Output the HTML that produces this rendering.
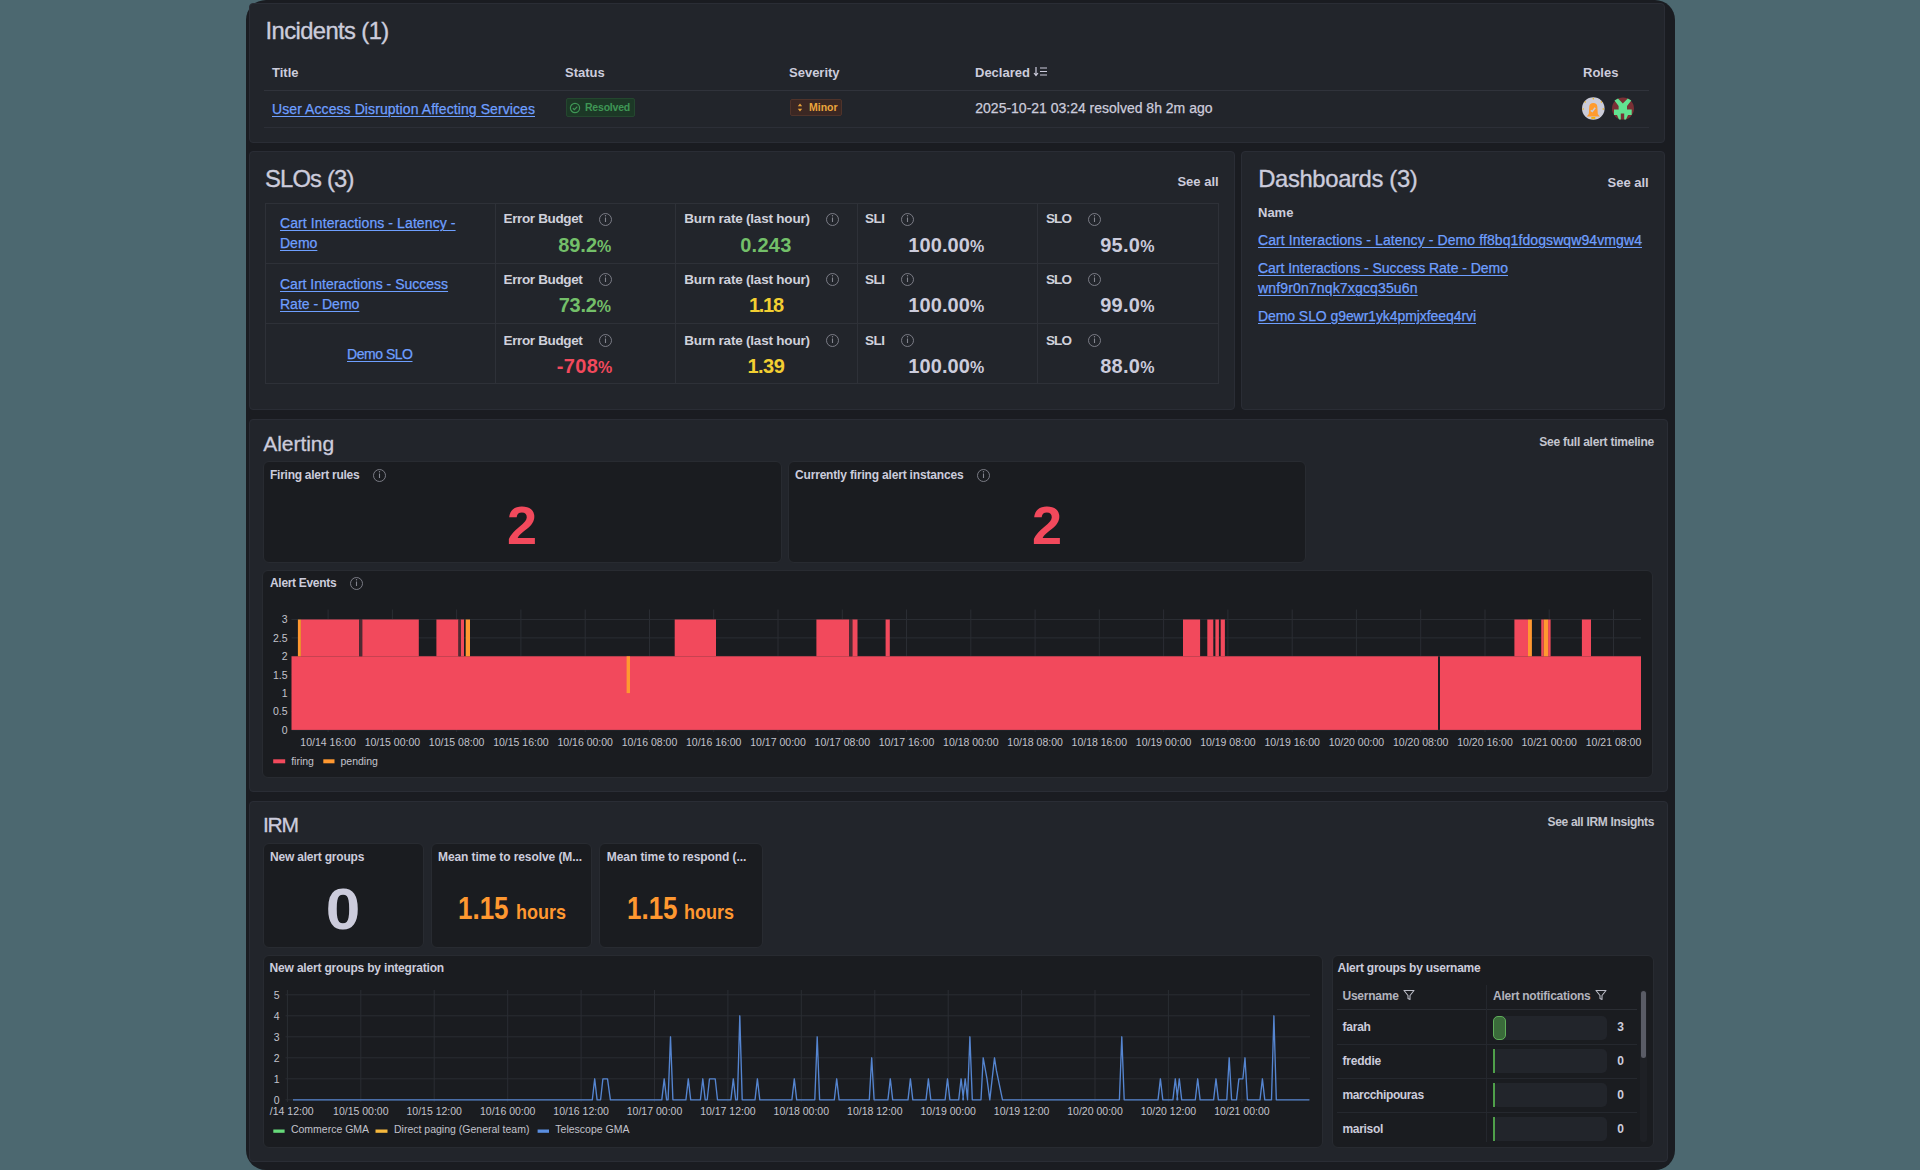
<!DOCTYPE html>
<html><head><meta charset="utf-8"><style>
html,body{margin:0;padding:0;}
body{width:1920px;height:1170px;background:#4c6870;position:relative;overflow:hidden;font-family:"Liberation Sans", sans-serif;}
.t{position:absolute;white-space:nowrap;}
.b{position:absolute;box-sizing:border-box;}
.s{position:absolute;overflow:visible;}
u{text-decoration-thickness:1px;text-underline-offset:1.5px;}
</style></head><body>
<div class="b" style="left:246px;top:0px;width:1429px;height:1170px;background:#1a1c21;border-radius:20px;"></div>
<div class="b" style="left:249px;top:3px;width:1416px;height:140px;background:#22252b;border:1px solid #2a2d35;border-radius:4px;"></div>
<div class="t" style="left:265.6px;top:19.1px;font-size:23.8px;line-height:23.8px;color:#ccccdc;font-weight:400;-webkit-text-stroke:0.35px #ccccdc;letter-spacing:-0.612px;" id="fit0">Incidents (1)</div>
<div class="t" style="left:272.0px;top:66.0px;font-size:13px;line-height:13px;color:#ccccdc;font-weight:700;">Title</div>
<div class="t" style="left:565.0px;top:66.0px;font-size:13px;line-height:13px;color:#ccccdc;font-weight:700;">Status</div>
<div class="t" style="left:789.0px;top:66.0px;font-size:13px;line-height:13px;color:#ccccdc;font-weight:700;">Severity</div>
<div class="t" style="left:975.0px;top:66.0px;font-size:13px;line-height:13px;color:#ccccdc;font-weight:700;">Declared</div>
<div class="t" style="left:1583.0px;top:66.0px;font-size:13px;line-height:13px;color:#ccccdc;font-weight:700;">Roles</div>
<svg class="s" style="left:1034px;top:66px" width="14" height="12"><path d="M2 1v8M0 7l2 2.5 2-2.5" stroke="#ccccdc" stroke-width="1.2" fill="none"/><path d="M6 2h7M6 5.5h7M6 9h7" stroke="#ccccdc" stroke-width="1.2"/></svg>
<div class="b" style="left:264px;top:90px;width:1385px;height:1px;background:#30333b;border-radius:0px;"></div>
<div class="t" style="left:272.0px;top:101.7px;font-size:14px;line-height:14px;color:#6e9fff;font-weight:400;-webkit-text-stroke:0.25px #6e9fff;letter-spacing:0.082px;" id="fit1"><u>User Access Disruption Affecting Services</u></div>
<div class="b" style="left:566px;top:98px;width:69px;height:19px;background:#1c3826;border:1px solid #24472f;border-radius:2px;"></div>
<svg class="s" style="left:569px;top:101.5px" width="12" height="12"><circle cx="6" cy="6" r="4.6" fill="none" stroke="#3f9655" stroke-width="1.2"/><path d="M3.8 6.2l1.6 1.5 2.9-3" stroke="#3f9655" stroke-width="1.2" fill="none"/></svg>
<div class="t" style="left:585.0px;top:102.4px;font-size:10.5px;line-height:10.5px;color:#3f9655;font-weight:700;letter-spacing:-0.211px;" id="fit2">Resolved</div>
<div class="b" style="left:790px;top:99px;width:52px;height:17px;background:#3b2723;border:1px solid #4f332a;border-radius:2px;"></div>
<svg class="s" style="left:796px;top:102px" width="8" height="11"><path d="M4 1.5L6.2 4.3H1.8Z M4 9.5L6.2 6.7H1.8Z" fill="#e8a33a"/></svg>
<div class="t" style="left:809.0px;top:102.4px;font-size:10.5px;line-height:10.5px;color:#eba53c;font-weight:700;letter-spacing:-0.016px;" id="fit3">Minor</div>
<div class="t" style="left:975.3px;top:101.4px;font-size:14px;line-height:14px;color:#ccccdc;font-weight:400;-webkit-text-stroke:0.25px #ccccdc;letter-spacing:-0.006px;" id="fit4">2025-10-21 03:24 resolved 8h 2m ago</div>
<div class="b" style="left:264px;top:127px;width:1385px;height:1px;background:#2c2f37;border-radius:0px;"></div>
<svg class="s" style="left:1581px;top:97px" width="54" height="24"><circle cx="12.3" cy="11.5" r="11.3" fill="#cbccd9"/><path d="M7.8 17 L8.3 9.5 Q8.5 6 12.3 6 Q16.1 6 16.3 9.5 L16.8 17 L18.8 19.5 L5.8 19.5 Z" fill="#ff9b2e"/><rect x="10.3" y="20" width="4" height="1.8" fill="#f5b000"/><path d="M9.8 13.3 L11.3 14.5 L14.2 10.8" stroke="#cbccd9" stroke-width="1.5" fill="none"/><circle cx="12.3" cy="1.8" r="0.7" fill="#f5b000"/><circle cx="4.2" cy="5" r="0.7" fill="#f5b000"/><circle cx="20.4" cy="5" r="0.7" fill="#f5b000"/><circle cx="2.2" cy="12" r="0.7" fill="#f5b000"/><circle cx="22.3" cy="12" r="0.8" fill="#f5b000"/><circle cx="42" cy="11.6" r="11" fill="#7a3035"/><path d="M33.5 3.5 L37 1.5 L41.8 6.5 L46.8 1.5 L50.3 3.5 L46 9 L46 12.5 L50.7 12.5 L50.7 18 L47 18 L45 22.6 L43.2 22.6 L43.2 16.5 L39.8 16.5 L39.8 22.6 L38 22.6 L36 18 L33 18 L33 12.5 L37.6 12.5 L37.6 9 Z" fill="#62e391"/></svg>
<div class="b" style="left:249px;top:151px;width:986px;height:259px;background:#22252b;border:1px solid #2a2d35;border-radius:4px;"></div>
<div class="t" style="left:265.0px;top:167.0px;font-size:23.8px;line-height:23.8px;color:#ccccdc;font-weight:400;-webkit-text-stroke:0.35px #ccccdc;letter-spacing:-0.840px;" id="fit5">SLOs (3)</div>
<div class="t" style="right:701.4px;top:175.2px;font-size:13px;line-height:13px;color:#ccccdc;font-weight:700;">See all</div>
<div class="b" style="left:265px;top:203px;width:954px;height:181px;border:1px solid #2e3138;"></div>
<div class="b" style="left:265px;top:263px;width:954px;height:1px;background:#2e3138;border-radius:0px;"></div>
<div class="b" style="left:265px;top:323px;width:954px;height:1px;background:#2e3138;border-radius:0px;"></div>
<div class="b" style="left:495px;top:203px;width:1px;height:180px;background:#2e3138;border-radius:0px;"></div>
<div class="b" style="left:675px;top:203px;width:1px;height:180px;background:#2e3138;border-radius:0px;"></div>
<div class="b" style="left:857px;top:203px;width:1px;height:180px;background:#2e3138;border-radius:0px;"></div>
<div class="b" style="left:1037px;top:203px;width:1px;height:180px;background:#2e3138;border-radius:0px;"></div>
<div class="t" style="left:280.0px;top:215.9px;font-size:14px;line-height:14px;color:#6e9fff;font-weight:400;-webkit-text-stroke:0.25px #6e9fff;letter-spacing:0.098px;" id="fit6"><u>Cart Interactions - Latency -</u></div>
<div class="t" style="left:280.0px;top:236.0px;font-size:14px;line-height:14px;color:#6e9fff;font-weight:400;-webkit-text-stroke:0.25px #6e9fff;"><u>Demo</u></div>
<div class="t" style="left:503.5px;top:212.3px;font-size:13.5px;line-height:13.5px;color:#d0d1db;font-weight:700;letter-spacing:-0.355px;" id="fit7">Error Budget</div>
<svg class="s" style="left:597.5px;top:211.5px" width="15.0" height="15.0"><circle cx="7.5" cy="7.5" r="6.0" fill="none" stroke="#83858e" stroke-width="0.9"/><line x1="7.5" y1="5.5" x2="7.5" y2="10.0" stroke="#83858e" stroke-width="1.1"/><circle cx="7.5" cy="3.7" r="0.7" fill="#83858e"/></svg>
<div class="t" style="left:684.3px;top:212.3px;font-size:13.5px;line-height:13.5px;color:#d0d1db;font-weight:700;letter-spacing:-0.203px;" id="fit8">Burn rate (last hour)</div>
<svg class="s" style="left:824.5px;top:211.5px" width="15.0" height="15.0"><circle cx="7.5" cy="7.5" r="6.0" fill="none" stroke="#83858e" stroke-width="0.9"/><line x1="7.5" y1="5.5" x2="7.5" y2="10.0" stroke="#83858e" stroke-width="1.1"/><circle cx="7.5" cy="3.7" r="0.7" fill="#83858e"/></svg>
<div class="t" style="left:865.0px;top:212.3px;font-size:13.5px;line-height:13.5px;color:#d0d1db;font-weight:700;letter-spacing:-0.505px;" id="fit9">SLI</div>
<svg class="s" style="left:899.5px;top:211.5px" width="15.0" height="15.0"><circle cx="7.5" cy="7.5" r="6.0" fill="none" stroke="#83858e" stroke-width="0.9"/><line x1="7.5" y1="5.5" x2="7.5" y2="10.0" stroke="#83858e" stroke-width="1.1"/><circle cx="7.5" cy="3.7" r="0.7" fill="#83858e"/></svg>
<div class="t" style="left:1046.0px;top:212.3px;font-size:13.5px;line-height:13.5px;color:#d0d1db;font-weight:700;letter-spacing:-0.922px;" id="fit10">SLO</div>
<svg class="s" style="left:1086.5px;top:211.5px" width="15.0" height="15.0"><circle cx="7.5" cy="7.5" r="6.0" fill="none" stroke="#83858e" stroke-width="0.9"/><line x1="7.5" y1="5.5" x2="7.5" y2="10.0" stroke="#83858e" stroke-width="1.1"/><circle cx="7.5" cy="3.7" r="0.7" fill="#83858e"/></svg>
<div class="t" style="left:584.7px;transform:translateX(-50%);top:234.5px;font-size:20px;line-height:20px;color:#73bf69;font-weight:700;letter-spacing:-0.034px;" id="fit11">89.2<span style="font-size:16px">%</span></div>
<div class="t" style="left:765.9px;transform:translateX(-50%);top:234.5px;font-size:20px;line-height:20px;color:#73bf69;font-weight:700;letter-spacing:0.291px;" id="fit12">0.243</div>
<div class="t" style="left:946.3px;transform:translateX(-50%);top:234.5px;font-size:20px;line-height:20px;color:#ccccdc;font-weight:700;letter-spacing:0.085px;" id="fit13">100.00<span style="font-size:16px">%</span></div>
<div class="t" style="left:1127.4px;transform:translateX(-50%);top:234.5px;font-size:20px;line-height:20px;color:#ccccdc;font-weight:700;letter-spacing:0.266px;" id="fit14">95.0<span style="font-size:16px">%</span></div>
<div class="t" style="left:280.0px;top:276.5px;font-size:14px;line-height:14px;color:#6e9fff;font-weight:400;-webkit-text-stroke:0.25px #6e9fff;"><u>Cart Interactions - Success</u></div>
<div class="t" style="left:280.0px;top:296.6px;font-size:14px;line-height:14px;color:#6e9fff;font-weight:400;-webkit-text-stroke:0.25px #6e9fff;"><u>Rate - Demo</u></div>
<div class="t" style="left:503.5px;top:272.9px;font-size:13.5px;line-height:13.5px;color:#d0d1db;font-weight:700;letter-spacing:-0.355px;" id="fit15">Error Budget</div>
<svg class="s" style="left:597.5px;top:272.1px" width="15.0" height="15.0"><circle cx="7.5" cy="7.5" r="6.0" fill="none" stroke="#83858e" stroke-width="0.9"/><line x1="7.5" y1="5.5" x2="7.5" y2="10.0" stroke="#83858e" stroke-width="1.1"/><circle cx="7.5" cy="3.7" r="0.7" fill="#83858e"/></svg>
<div class="t" style="left:684.3px;top:272.9px;font-size:13.5px;line-height:13.5px;color:#d0d1db;font-weight:700;letter-spacing:-0.203px;" id="fit16">Burn rate (last hour)</div>
<svg class="s" style="left:824.5px;top:272.1px" width="15.0" height="15.0"><circle cx="7.5" cy="7.5" r="6.0" fill="none" stroke="#83858e" stroke-width="0.9"/><line x1="7.5" y1="5.5" x2="7.5" y2="10.0" stroke="#83858e" stroke-width="1.1"/><circle cx="7.5" cy="3.7" r="0.7" fill="#83858e"/></svg>
<div class="t" style="left:865.0px;top:272.9px;font-size:13.5px;line-height:13.5px;color:#d0d1db;font-weight:700;letter-spacing:-0.505px;" id="fit17">SLI</div>
<svg class="s" style="left:899.5px;top:272.1px" width="15.0" height="15.0"><circle cx="7.5" cy="7.5" r="6.0" fill="none" stroke="#83858e" stroke-width="0.9"/><line x1="7.5" y1="5.5" x2="7.5" y2="10.0" stroke="#83858e" stroke-width="1.1"/><circle cx="7.5" cy="3.7" r="0.7" fill="#83858e"/></svg>
<div class="t" style="left:1046.0px;top:272.9px;font-size:13.5px;line-height:13.5px;color:#d0d1db;font-weight:700;letter-spacing:-0.922px;" id="fit18">SLO</div>
<svg class="s" style="left:1086.5px;top:272.1px" width="15.0" height="15.0"><circle cx="7.5" cy="7.5" r="6.0" fill="none" stroke="#83858e" stroke-width="0.9"/><line x1="7.5" y1="5.5" x2="7.5" y2="10.0" stroke="#83858e" stroke-width="1.1"/><circle cx="7.5" cy="3.7" r="0.7" fill="#83858e"/></svg>
<div class="t" style="left:584.7px;transform:translateX(-50%);top:295.1px;font-size:20px;line-height:20px;color:#73bf69;font-weight:700;letter-spacing:-0.234px;" id="fit19">73.2<span style="font-size:16px">%</span></div>
<div class="t" style="left:765.9px;transform:translateX(-50%);top:295.1px;font-size:20px;line-height:20px;color:#f2cf32;font-weight:700;letter-spacing:-1.234px;" id="fit20">1.18</div>
<div class="t" style="left:946.3px;transform:translateX(-50%);top:295.1px;font-size:20px;line-height:20px;color:#ccccdc;font-weight:700;letter-spacing:0.085px;" id="fit21">100.00<span style="font-size:16px">%</span></div>
<div class="t" style="left:1127.4px;transform:translateX(-50%);top:295.1px;font-size:20px;line-height:20px;color:#ccccdc;font-weight:700;letter-spacing:0.266px;" id="fit22">99.0<span style="font-size:16px">%</span></div>
<div class="t" style="left:347.0px;top:346.6px;font-size:14px;line-height:14px;color:#6e9fff;font-weight:400;-webkit-text-stroke:0.25px #6e9fff;letter-spacing:-0.469px;" id="fit23"><u>Demo SLO</u></div>
<div class="t" style="left:503.5px;top:333.5px;font-size:13.5px;line-height:13.5px;color:#d0d1db;font-weight:700;letter-spacing:-0.355px;" id="fit24">Error Budget</div>
<svg class="s" style="left:597.5px;top:332.7px" width="15.0" height="15.0"><circle cx="7.5" cy="7.5" r="6.0" fill="none" stroke="#83858e" stroke-width="0.9"/><line x1="7.5" y1="5.5" x2="7.5" y2="10.0" stroke="#83858e" stroke-width="1.1"/><circle cx="7.5" cy="3.7" r="0.7" fill="#83858e"/></svg>
<div class="t" style="left:684.3px;top:333.5px;font-size:13.5px;line-height:13.5px;color:#d0d1db;font-weight:700;letter-spacing:-0.203px;" id="fit25">Burn rate (last hour)</div>
<svg class="s" style="left:824.5px;top:332.7px" width="15.0" height="15.0"><circle cx="7.5" cy="7.5" r="6.0" fill="none" stroke="#83858e" stroke-width="0.9"/><line x1="7.5" y1="5.5" x2="7.5" y2="10.0" stroke="#83858e" stroke-width="1.1"/><circle cx="7.5" cy="3.7" r="0.7" fill="#83858e"/></svg>
<div class="t" style="left:865.0px;top:333.5px;font-size:13.5px;line-height:13.5px;color:#d0d1db;font-weight:700;letter-spacing:-0.505px;" id="fit26">SLI</div>
<svg class="s" style="left:899.5px;top:332.7px" width="15.0" height="15.0"><circle cx="7.5" cy="7.5" r="6.0" fill="none" stroke="#83858e" stroke-width="0.9"/><line x1="7.5" y1="5.5" x2="7.5" y2="10.0" stroke="#83858e" stroke-width="1.1"/><circle cx="7.5" cy="3.7" r="0.7" fill="#83858e"/></svg>
<div class="t" style="left:1046.0px;top:333.5px;font-size:13.5px;line-height:13.5px;color:#d0d1db;font-weight:700;letter-spacing:-0.922px;" id="fit27">SLO</div>
<svg class="s" style="left:1086.5px;top:332.7px" width="15.0" height="15.0"><circle cx="7.5" cy="7.5" r="6.0" fill="none" stroke="#83858e" stroke-width="0.9"/><line x1="7.5" y1="5.5" x2="7.5" y2="10.0" stroke="#83858e" stroke-width="1.1"/><circle cx="7.5" cy="3.7" r="0.7" fill="#83858e"/></svg>
<div class="t" style="left:584.7px;transform:translateX(-50%);top:355.7px;font-size:20px;line-height:20px;color:#f2495c;font-weight:700;letter-spacing:0.347px;" id="fit28">-708<span style="font-size:16px">%</span></div>
<div class="t" style="left:765.9px;transform:translateX(-50%);top:355.7px;font-size:20px;line-height:20px;color:#f2cf32;font-weight:700;letter-spacing:-0.484px;" id="fit29">1.39</div>
<div class="t" style="left:946.3px;transform:translateX(-50%);top:355.7px;font-size:20px;line-height:20px;color:#ccccdc;font-weight:700;letter-spacing:0.085px;" id="fit30">100.00<span style="font-size:16px">%</span></div>
<div class="t" style="left:1127.4px;transform:translateX(-50%);top:355.7px;font-size:20px;line-height:20px;color:#ccccdc;font-weight:700;letter-spacing:0.266px;" id="fit31">88.0<span style="font-size:16px">%</span></div>
<div class="b" style="left:1241px;top:151px;width:424px;height:259px;background:#22252b;border:1px solid #2a2d35;border-radius:4px;"></div>
<div class="t" style="left:1258.2px;top:167.4px;font-size:23.8px;line-height:23.8px;color:#ccccdc;font-weight:400;-webkit-text-stroke:0.35px #ccccdc;letter-spacing:-0.344px;" id="fit32">Dashboards (3)</div>
<div class="t" style="right:271.3px;top:175.7px;font-size:13px;line-height:13px;color:#ccccdc;font-weight:700;">See all</div>
<div class="t" style="left:1258.0px;top:206.3px;font-size:13px;line-height:13px;color:#ccccdc;font-weight:700;">Name</div>
<div class="t" style="left:1258.0px;top:232.6px;font-size:14px;line-height:14px;color:#6e9fff;font-weight:400;-webkit-text-stroke:0.25px #6e9fff;letter-spacing:0.095px;" id="fit33"><u>Cart Interactions - Latency - Demo ff8bq1fdogswqw94vmgw4</u></div>
<div class="t" style="left:1258.0px;top:260.6px;font-size:14px;line-height:14px;color:#6e9fff;font-weight:400;-webkit-text-stroke:0.25px #6e9fff;letter-spacing:-0.034px;" id="fit34"><u>Cart Interactions - Success Rate - Demo</u></div>
<div class="t" style="left:1258.0px;top:281.1px;font-size:14px;line-height:14px;color:#6e9fff;font-weight:400;-webkit-text-stroke:0.25px #6e9fff;letter-spacing:0.154px;" id="fit35"><u>wnf9r0n7nqk7xgcq35u6n</u></div>
<div class="t" style="left:1258.0px;top:308.5px;font-size:14px;line-height:14px;color:#6e9fff;font-weight:400;-webkit-text-stroke:0.25px #6e9fff;letter-spacing:-0.074px;" id="fit36"><u>Demo SLO g9ewr1yk4pmjxfeeq4rvi</u></div>
<div class="b" style="left:249px;top:419px;width:1419px;height:373px;background:#22252b;border:1px solid #2a2d35;border-radius:4px;"></div>
<div class="t" style="left:263.2px;top:432.6px;font-size:21px;line-height:21px;color:#ccccdc;font-weight:400;-webkit-text-stroke:0.3px #ccccdc;letter-spacing:-0.027px;" id="fit37">Alerting</div>
<div class="t" style="left:1539.2px;top:435.6px;font-size:12px;line-height:12px;color:#c4c5cf;font-weight:700;letter-spacing:-0.229px;" id="fit38">See full alert timeline</div>
<div class="b" style="left:262.5px;top:461px;width:519.2px;height:102px;background:#1a1c20;border:1px solid #282b31;border-radius:6px;"></div>
<div class="b" style="left:787.8px;top:461px;width:518.2px;height:102px;background:#1a1c20;border:1px solid #282b31;border-radius:6px;"></div>
<div class="t" style="left:270.0px;top:469.2px;font-size:12px;line-height:12px;color:#ccccdc;font-weight:700;letter-spacing:-0.258px;" id="fit39">Firing alert rules</div>
<svg class="s" style="left:371.5px;top:468.1px" width="15.0" height="15.0"><circle cx="7.5" cy="7.5" r="6.0" fill="none" stroke="#83858e" stroke-width="0.9"/><line x1="7.5" y1="5.5" x2="7.5" y2="10.0" stroke="#83858e" stroke-width="1.1"/><circle cx="7.5" cy="3.7" r="0.7" fill="#83858e"/></svg>
<div class="t" style="left:522.0px;transform:translateX(-50%);top:497.9px;font-size:54px;line-height:54px;color:#f2495c;font-weight:700;">2</div>
<div class="t" style="left:795.0px;top:469.2px;font-size:12px;line-height:12px;color:#ccccdc;font-weight:700;letter-spacing:-0.177px;" id="fit40">Currently firing alert instances</div>
<svg class="s" style="left:975.5px;top:468.1px" width="15.0" height="15.0"><circle cx="7.5" cy="7.5" r="6.0" fill="none" stroke="#83858e" stroke-width="0.9"/><line x1="7.5" y1="5.5" x2="7.5" y2="10.0" stroke="#83858e" stroke-width="1.1"/><circle cx="7.5" cy="3.7" r="0.7" fill="#83858e"/></svg>
<div class="t" style="left:1047.0px;transform:translateX(-50%);top:497.9px;font-size:54px;line-height:54px;color:#f2495c;font-weight:700;">2</div>
<div class="b" style="left:262px;top:570px;width:1391px;height:208px;background:#1a1c20;border:1px solid #282b31;border-radius:6px;"></div>
<div class="t" style="left:270.0px;top:576.8px;font-size:12px;line-height:12px;color:#ccccdc;font-weight:700;letter-spacing:-0.311px;" id="fit41">Alert Events</div>
<svg class="s" style="left:348.5px;top:575.5px" width="15.0" height="15.0"><circle cx="7.5" cy="7.5" r="6.0" fill="none" stroke="#83858e" stroke-width="0.9"/><line x1="7.5" y1="5.5" x2="7.5" y2="10.0" stroke="#83858e" stroke-width="1.1"/><circle cx="7.5" cy="3.7" r="0.7" fill="#83858e"/></svg>
<div class="b" style="left:249px;top:801px;width:1419px;height:361px;background:#22252b;border:1px solid #2a2d35;border-radius:4px;"></div>
<div class="t" style="left:263.0px;top:814.4px;font-size:21px;line-height:21px;color:#ccccdc;font-weight:400;-webkit-text-stroke:0.3px #ccccdc;letter-spacing:-1.298px;" id="fit42">IRM</div>
<div class="t" style="left:1547.5px;top:816.3px;font-size:12px;line-height:12px;color:#c4c5cf;font-weight:700;letter-spacing:-0.310px;" id="fit43">See all IRM Insights</div>
<div class="b" style="left:262.8px;top:843.3px;width:161.09999999999997px;height:104.5px;background:#1a1c20;border:1px solid #282b31;border-radius:6px;"></div>
<div class="t" style="left:270.0px;top:850.8px;font-size:12px;line-height:12px;color:#ccccdc;font-weight:700;letter-spacing:-0.203px;" id="fit44">New alert groups</div>
<div class="b" style="left:430.6px;top:843.3px;width:161.60000000000002px;height:104.5px;background:#1a1c20;border:1px solid #282b31;border-radius:6px;"></div>
<div class="t" style="left:438.0px;top:850.8px;font-size:12px;line-height:12px;color:#ccccdc;font-weight:700;letter-spacing:-0.078px;" id="fit45">Mean time to resolve (M...</div>
<div class="b" style="left:599.4px;top:843.3px;width:163.39999999999998px;height:104.5px;background:#1a1c20;border:1px solid #282b31;border-radius:6px;"></div>
<div class="t" style="left:606.8px;top:850.8px;font-size:12px;line-height:12px;color:#ccccdc;font-weight:700;letter-spacing:-0.074px;" id="fit46">Mean time to respond (...</div>
<div class="t" style="left:343.3px;transform:translateX(-50%);top:881.3px;font-size:57.5px;line-height:57.5px;color:#ccccdc;font-weight:700;transform:translateX(-50%) scaleX(1.08);">0</div>
<div class="t" style="left:458.4px;top:892.0px;font-size:32px;line-height:32px;color:#ff9830;font-weight:700;transform:scaleX(0.8109);transform-origin:0 0;" id="fit47">1.15</div>
<div class="t" style="left:515.6px;top:901.3px;font-size:21px;line-height:21px;color:#ff9830;font-weight:700;transform:scaleX(0.8570);transform-origin:0 0;" id="fit48">hours</div>
<div class="t" style="left:627.0px;top:892.0px;font-size:32px;line-height:32px;color:#ff9830;font-weight:700;transform:scaleX(0.8109);transform-origin:0 0;" id="fit49">1.15</div>
<div class="t" style="left:684.2px;top:901.3px;font-size:21px;line-height:21px;color:#ff9830;font-weight:700;transform:scaleX(0.8570);transform-origin:0 0;" id="fit50">hours</div>
<div class="b" style="left:262.5px;top:955px;width:1060.5px;height:193px;background:#1a1c20;border:1px solid #282b31;border-radius:6px;"></div>
<div class="t" style="left:269.6px;top:962.3px;font-size:12px;line-height:12px;color:#ccccdc;font-weight:700;letter-spacing:-0.181px;" id="fit51">New alert groups by integration</div>
<div class="b" style="left:1332px;top:955px;width:321.5px;height:193px;background:#1a1c20;border:1px solid #282b31;border-radius:6px;"></div>
<div class="t" style="left:1337.6px;top:961.5px;font-size:12px;line-height:12px;color:#ccccdc;font-weight:700;letter-spacing:-0.243px;" id="fit52">Alert groups by username</div>
<svg class="s" style="left:0;top:0" width="1920" height="1170" font-family="Liberation Sans, sans-serif"><line x1="291.5" y1="729.9" x2="1641" y2="729.9" stroke="#2a2d33" stroke-width="1"/><line x1="291.5" y1="711.5" x2="1641" y2="711.5" stroke="#2a2d33" stroke-width="1"/><line x1="291.5" y1="693.1" x2="1641" y2="693.1" stroke="#2a2d33" stroke-width="1"/><line x1="291.5" y1="674.7" x2="1641" y2="674.7" stroke="#2a2d33" stroke-width="1"/><line x1="291.5" y1="656.3" x2="1641" y2="656.3" stroke="#2a2d33" stroke-width="1"/><line x1="291.5" y1="637.9" x2="1641" y2="637.9" stroke="#2a2d33" stroke-width="1"/><line x1="291.5" y1="619.5" x2="1641" y2="619.5" stroke="#2a2d33" stroke-width="1"/><line x1="328.1" y1="609.5" x2="328.1" y2="732" stroke="#2a2d33" stroke-width="1"/><line x1="392.4" y1="609.5" x2="392.4" y2="732" stroke="#2a2d33" stroke-width="1"/><line x1="456.6" y1="609.5" x2="456.6" y2="732" stroke="#2a2d33" stroke-width="1"/><line x1="520.9" y1="609.5" x2="520.9" y2="732" stroke="#2a2d33" stroke-width="1"/><line x1="585.2" y1="609.5" x2="585.2" y2="732" stroke="#2a2d33" stroke-width="1"/><line x1="649.5" y1="609.5" x2="649.5" y2="732" stroke="#2a2d33" stroke-width="1"/><line x1="713.7" y1="609.5" x2="713.7" y2="732" stroke="#2a2d33" stroke-width="1"/><line x1="778.0" y1="609.5" x2="778.0" y2="732" stroke="#2a2d33" stroke-width="1"/><line x1="842.3" y1="609.5" x2="842.3" y2="732" stroke="#2a2d33" stroke-width="1"/><line x1="906.5" y1="609.5" x2="906.5" y2="732" stroke="#2a2d33" stroke-width="1"/><line x1="970.8" y1="609.5" x2="970.8" y2="732" stroke="#2a2d33" stroke-width="1"/><line x1="1035.1" y1="609.5" x2="1035.1" y2="732" stroke="#2a2d33" stroke-width="1"/><line x1="1099.3" y1="609.5" x2="1099.3" y2="732" stroke="#2a2d33" stroke-width="1"/><line x1="1163.6" y1="609.5" x2="1163.6" y2="732" stroke="#2a2d33" stroke-width="1"/><line x1="1227.9" y1="609.5" x2="1227.9" y2="732" stroke="#2a2d33" stroke-width="1"/><line x1="1292.2" y1="609.5" x2="1292.2" y2="732" stroke="#2a2d33" stroke-width="1"/><line x1="1356.4" y1="609.5" x2="1356.4" y2="732" stroke="#2a2d33" stroke-width="1"/><line x1="1420.7" y1="609.5" x2="1420.7" y2="732" stroke="#2a2d33" stroke-width="1"/><line x1="1485.0" y1="609.5" x2="1485.0" y2="732" stroke="#2a2d33" stroke-width="1"/><line x1="1549.2" y1="609.5" x2="1549.2" y2="732" stroke="#2a2d33" stroke-width="1"/><line x1="1613.5" y1="609.5" x2="1613.5" y2="732" stroke="#2a2d33" stroke-width="1"/><rect x="291.50" y="656.30" width="1349.50" height="73.60" fill="#f2495c"/><rect x="300.90" y="619.50" width="58.30" height="36.80" fill="#f2495c"/><rect x="362.20" y="619.50" width="56.60" height="36.80" fill="#f2495c"/><rect x="436.40" y="619.50" width="22.10" height="36.80" fill="#f2495c"/><rect x="460.70" y="619.50" width="3.30" height="36.80" fill="#f2495c"/><rect x="674.70" y="619.50" width="41.30" height="36.80" fill="#f2495c"/><rect x="816.40" y="619.50" width="32.80" height="36.80" fill="#f2495c"/><rect x="852.30" y="619.50" width="5.20" height="36.80" fill="#f2495c"/><rect x="885.60" y="619.50" width="4.20" height="36.80" fill="#f2495c"/><rect x="1183.00" y="619.50" width="17.10" height="36.80" fill="#f2495c"/><rect x="1207.30" y="619.50" width="6.00" height="36.80" fill="#f2495c"/><rect x="1215.40" y="619.50" width="3.50" height="36.80" fill="#f2495c"/><rect x="1220.70" y="619.50" width="4.20" height="36.80" fill="#f2495c"/><rect x="1514.40" y="619.50" width="13.60" height="36.80" fill="#f2495c"/><rect x="1541.25" y="619.50" width="2.50" height="36.80" fill="#f2495c"/><rect x="1548.10" y="619.50" width="2.50" height="36.80" fill="#f2495c"/><rect x="1581.90" y="619.50" width="9.10" height="36.80" fill="#f2495c"/><rect x="359.20" y="619.50" width="3.00" height="36.80" fill="#4e2b33"/><rect x="458.50" y="619.50" width="2.20" height="36.80" fill="#4e2b33"/><rect x="849.20" y="619.50" width="3.10" height="36.80" fill="#4e2b33"/><rect x="297.90" y="619.50" width="3.00" height="36.80" fill="#ff9830"/><rect x="465.70" y="619.50" width="4.30" height="36.80" fill="#ff9830"/><rect x="626.60" y="656.30" width="3.40" height="36.80" fill="#ff9830"/><rect x="1528.00" y="619.50" width="3.90" height="36.80" fill="#ff9830"/><rect x="1543.75" y="619.50" width="4.35" height="36.80" fill="#ff9830"/><rect x="1438.00" y="656.30" width="2.00" height="73.60" fill="#1d1f24"/><text x="287.5" y="733.7" text-anchor="end" font-size="10.5" fill="#c2c3cc">0</text><text x="287.5" y="715.3" text-anchor="end" font-size="10.5" fill="#c2c3cc">0.5</text><text x="287.5" y="696.9" text-anchor="end" font-size="10.5" fill="#c2c3cc">1</text><text x="287.5" y="678.5" text-anchor="end" font-size="10.5" fill="#c2c3cc">1.5</text><text x="287.5" y="660.1" text-anchor="end" font-size="10.5" fill="#c2c3cc">2</text><text x="287.5" y="641.7" text-anchor="end" font-size="10.5" fill="#c2c3cc">2.5</text><text x="287.5" y="623.3" text-anchor="end" font-size="10.5" fill="#c2c3cc">3</text><text x="328.1" y="745.8" text-anchor="middle" font-size="10.5" fill="#c2c3cc">10/14 16:00</text><text x="392.4" y="745.8" text-anchor="middle" font-size="10.5" fill="#c2c3cc">10/15 00:00</text><text x="456.6" y="745.8" text-anchor="middle" font-size="10.5" fill="#c2c3cc">10/15 08:00</text><text x="520.9" y="745.8" text-anchor="middle" font-size="10.5" fill="#c2c3cc">10/15 16:00</text><text x="585.2" y="745.8" text-anchor="middle" font-size="10.5" fill="#c2c3cc">10/16 00:00</text><text x="649.5" y="745.8" text-anchor="middle" font-size="10.5" fill="#c2c3cc">10/16 08:00</text><text x="713.7" y="745.8" text-anchor="middle" font-size="10.5" fill="#c2c3cc">10/16 16:00</text><text x="778.0" y="745.8" text-anchor="middle" font-size="10.5" fill="#c2c3cc">10/17 00:00</text><text x="842.3" y="745.8" text-anchor="middle" font-size="10.5" fill="#c2c3cc">10/17 08:00</text><text x="906.5" y="745.8" text-anchor="middle" font-size="10.5" fill="#c2c3cc">10/17 16:00</text><text x="970.8" y="745.8" text-anchor="middle" font-size="10.5" fill="#c2c3cc">10/18 00:00</text><text x="1035.1" y="745.8" text-anchor="middle" font-size="10.5" fill="#c2c3cc">10/18 08:00</text><text x="1099.3" y="745.8" text-anchor="middle" font-size="10.5" fill="#c2c3cc">10/18 16:00</text><text x="1163.6" y="745.8" text-anchor="middle" font-size="10.5" fill="#c2c3cc">10/19 00:00</text><text x="1227.9" y="745.8" text-anchor="middle" font-size="10.5" fill="#c2c3cc">10/19 08:00</text><text x="1292.2" y="745.8" text-anchor="middle" font-size="10.5" fill="#c2c3cc">10/19 16:00</text><text x="1356.4" y="745.8" text-anchor="middle" font-size="10.5" fill="#c2c3cc">10/20 00:00</text><text x="1420.7" y="745.8" text-anchor="middle" font-size="10.5" fill="#c2c3cc">10/20 08:00</text><text x="1485.0" y="745.8" text-anchor="middle" font-size="10.5" fill="#c2c3cc">10/20 16:00</text><text x="1549.2" y="745.8" text-anchor="middle" font-size="10.5" fill="#c2c3cc">10/21 00:00</text><text x="1613.5" y="745.8" text-anchor="middle" font-size="10.5" fill="#c2c3cc">10/21 08:00</text><rect x="273.20" y="759.30" width="12.00" height="4.00" fill="#f2495c"/><text x="291.2" y="764.5" font-size="10.5" fill="#c2c3cc">firing</text><rect x="323.30" y="759.30" width="11.20" height="4.00" fill="#ff9830"/><text x="340.5" y="764.5" font-size="10.5" fill="#c2c3cc">pending</text><line x1="285.5" y1="1099.8" x2="1310" y2="1099.8" stroke="#2a2d33" stroke-width="1"/><line x1="285.5" y1="1078.8" x2="1310" y2="1078.8" stroke="#2a2d33" stroke-width="1"/><line x1="285.5" y1="1057.8" x2="1310" y2="1057.8" stroke="#2a2d33" stroke-width="1"/><line x1="285.5" y1="1036.8" x2="1310" y2="1036.8" stroke="#2a2d33" stroke-width="1"/><line x1="285.5" y1="1015.8" x2="1310" y2="1015.8" stroke="#2a2d33" stroke-width="1"/><line x1="285.5" y1="994.8" x2="1310" y2="994.8" stroke="#2a2d33" stroke-width="1"/><line x1="287.4" y1="990" x2="287.4" y2="1102" stroke="#2a2d33" stroke-width="1"/><line x1="360.8" y1="990" x2="360.8" y2="1102" stroke="#2a2d33" stroke-width="1"/><line x1="434.2" y1="990" x2="434.2" y2="1102" stroke="#2a2d33" stroke-width="1"/><line x1="507.7" y1="990" x2="507.7" y2="1102" stroke="#2a2d33" stroke-width="1"/><line x1="581.1" y1="990" x2="581.1" y2="1102" stroke="#2a2d33" stroke-width="1"/><line x1="654.5" y1="990" x2="654.5" y2="1102" stroke="#2a2d33" stroke-width="1"/><line x1="727.9" y1="990" x2="727.9" y2="1102" stroke="#2a2d33" stroke-width="1"/><line x1="801.3" y1="990" x2="801.3" y2="1102" stroke="#2a2d33" stroke-width="1"/><line x1="874.8" y1="990" x2="874.8" y2="1102" stroke="#2a2d33" stroke-width="1"/><line x1="948.2" y1="990" x2="948.2" y2="1102" stroke="#2a2d33" stroke-width="1"/><line x1="1021.6" y1="990" x2="1021.6" y2="1102" stroke="#2a2d33" stroke-width="1"/><line x1="1095.0" y1="990" x2="1095.0" y2="1102" stroke="#2a2d33" stroke-width="1"/><line x1="1168.4" y1="990" x2="1168.4" y2="1102" stroke="#2a2d33" stroke-width="1"/><line x1="1241.9" y1="990" x2="1241.9" y2="1102" stroke="#2a2d33" stroke-width="1"/><text x="279.6" y="1103.6" text-anchor="end" font-size="10.5" fill="#c2c3cc">0</text><text x="279.6" y="1082.6" text-anchor="end" font-size="10.5" fill="#c2c3cc">1</text><text x="279.6" y="1061.6" text-anchor="end" font-size="10.5" fill="#c2c3cc">2</text><text x="279.6" y="1040.6" text-anchor="end" font-size="10.5" fill="#c2c3cc">3</text><text x="279.6" y="1019.6" text-anchor="end" font-size="10.5" fill="#c2c3cc">4</text><text x="279.6" y="998.6" text-anchor="end" font-size="10.5" fill="#c2c3cc">5</text><text x="269.8" y="1115.4" font-size="10.5" fill="#c2c3cc">/14 12:00</text><text x="360.8" y="1115.4" text-anchor="middle" font-size="10.5" fill="#c2c3cc">10/15 00:00</text><text x="434.2" y="1115.4" text-anchor="middle" font-size="10.5" fill="#c2c3cc">10/15 12:00</text><text x="507.7" y="1115.4" text-anchor="middle" font-size="10.5" fill="#c2c3cc">10/16 00:00</text><text x="581.1" y="1115.4" text-anchor="middle" font-size="10.5" fill="#c2c3cc">10/16 12:00</text><text x="654.5" y="1115.4" text-anchor="middle" font-size="10.5" fill="#c2c3cc">10/17 00:00</text><text x="727.9" y="1115.4" text-anchor="middle" font-size="10.5" fill="#c2c3cc">10/17 12:00</text><text x="801.3" y="1115.4" text-anchor="middle" font-size="10.5" fill="#c2c3cc">10/18 00:00</text><text x="874.8" y="1115.4" text-anchor="middle" font-size="10.5" fill="#c2c3cc">10/18 12:00</text><text x="948.2" y="1115.4" text-anchor="middle" font-size="10.5" fill="#c2c3cc">10/19 00:00</text><text x="1021.6" y="1115.4" text-anchor="middle" font-size="10.5" fill="#c2c3cc">10/19 12:00</text><text x="1095.0" y="1115.4" text-anchor="middle" font-size="10.5" fill="#c2c3cc">10/20 00:00</text><text x="1168.4" y="1115.4" text-anchor="middle" font-size="10.5" fill="#c2c3cc">10/20 12:00</text><text x="1241.9" y="1115.4" text-anchor="middle" font-size="10.5" fill="#c2c3cc">10/21 00:00</text><polyline points="293.0,1099.8 592.3,1099.8 594.7,1078.8 597.1,1099.8 600.6,1099.8 602.9,1078.8 607.5,1078.8 610.4,1099.8 661.8,1099.8 664.2,1078.8 666.6,1099.8 668.1,1099.8 670.5,1036.8 672.9,1099.8 685.9,1099.8 688.3,1078.8 690.7,1099.8 700.4,1099.8 702.8,1078.8 705.2,1099.8 707.2,1099.8 709.5,1078.8 710.6,1078.8 715.2,1078.8 717.5,1099.8 730.9,1099.8 733.3,1078.8 735.7,1099.8 737.4,1099.8 739.8,1015.8 742.2,1099.8 755.0,1099.8 757.4,1078.8 759.8,1099.8 791.9,1099.8 794.3,1078.8 796.7,1099.8 814.8,1099.8 817.2,1036.8 819.6,1099.8 834.3,1099.8 836.7,1078.8 839.1,1099.8 869.3,1099.8 871.7,1057.8 874.1,1099.8 887.9,1099.8 890.3,1078.8 892.7,1099.8 908.0,1099.8 910.4,1078.8 912.8,1099.8 926.0,1099.8 928.4,1078.8 930.8,1099.8 945.1,1099.8 947.5,1078.8 949.9,1099.8 958.7,1099.8 961.1,1078.8 963.5,1099.8 962.8,1099.8 965.2,1078.8 967.6,1099.8 967.5,1099.8 969.9,1036.8 972.3,1099.8 981.0,1099.8 983.2,1057.8 987.0,1078.8 989.8,1099.8 994.5,1057.8 996.4,1070.4 1002.5,1099.8 1119.4,1099.8 1121.8,1036.8 1124.2,1099.8 1158.0,1099.8 1160.4,1078.8 1162.8,1099.8 1172.9,1099.8 1175.3,1078.8 1177.7,1099.8 1176.9,1099.8 1179.3,1078.8 1181.7,1099.8 1195.3,1099.8 1197.7,1078.8 1200.1,1099.8 1213.6,1099.8 1216.0,1078.8 1218.4,1099.8 1226.8,1099.8 1229.2,1057.8 1231.6,1099.8 1236.5,1099.8 1238.9,1078.8 1242.9,1078.8 1245.0,1057.8 1247.4,1099.8 1260.0,1099.8 1262.4,1078.8 1264.8,1099.8 1271.5,1099.8 1273.9,1015.8 1276.3,1099.8 1309.4,1099.8" fill="none" stroke="#5585d0" stroke-width="1.35" stroke-linejoin="round"/><rect x="273.30" y="1129.50" width="11.30" height="3.30" fill="#66d97a"/><text x="290.9" y="1133.2" font-size="10.5" fill="#c2c3cc">Commerce GMA</text><rect x="375.50" y="1129.50" width="12.00" height="3.30" fill="#f5b83d"/><text x="394" y="1133.2" font-size="10.5" fill="#c2c3cc">Direct paging (General team)</text><rect x="537.60" y="1129.50" width="11.40" height="3.30" fill="#5a8ee0"/><text x="555.3" y="1133.2" font-size="10.5" fill="#c2c3cc">Telescope GMA</text></svg>
<div class="b" style="left:1337px;top:1009px;width:300px;height:1px;background:#2a2d33;border-radius:0px;"></div>
<div class="b" style="left:1486px;top:985px;width:1px;height:157px;background:#24272d;border-radius:0px;"></div>
<div class="t" style="left:1342.5px;top:989.6px;font-size:12px;line-height:12px;color:#b2b3bd;font-weight:700;letter-spacing:-0.243px;" id="fit53">Username</div>
<div class="t" style="left:1493.0px;top:989.6px;font-size:12px;line-height:12px;color:#b2b3bd;font-weight:700;letter-spacing:-0.237px;" id="fit54">Alert notifications</div>
<svg class="s" style="left:1403px;top:989px" width="12" height="12"><path d="M1 1.5h10L7 6.5v4L5 9.5v-3Z" fill="none" stroke="#b9bac4" stroke-width="1.1" stroke-linejoin="round"/></svg>
<svg class="s" style="left:1595px;top:989px" width="12" height="12"><path d="M1 1.5h10L7 6.5v4L5 9.5v-3Z" fill="none" stroke="#b9bac4" stroke-width="1.1" stroke-linejoin="round"/></svg>
<div class="t" style="left:1342.5px;top:1020.8px;font-size:12px;line-height:12px;color:#ccccdc;font-weight:700;letter-spacing:-0.229px;" id="fit55">farah</div>
<div class="b" style="left:1493px;top:1016px;width:114px;height:24px;background:#22252b;border-radius:5px;"></div>
<div class="b" style="left:1493px;top:1016px;width:13px;height:24px;background:#3a6b3a;border:1px solid #5fae5a;border-radius:5px;"></div>
<div class="t" style="right:296.0px;top:1020.8px;font-size:12px;line-height:12px;color:#ccccdc;font-weight:700;">3</div>
<div class="b" style="left:1337px;top:1044px;width:300px;height:1px;background:#25282e;border-radius:0px;"></div>
<div class="t" style="left:1342.5px;top:1054.8px;font-size:12px;line-height:12px;color:#ccccdc;font-weight:700;letter-spacing:-0.217px;" id="fit56">freddie</div>
<div class="b" style="left:1493px;top:1049px;width:114px;height:24px;background:#22252b;border-radius:5px;"></div>
<div class="b" style="left:1493px;top:1049px;width:2px;height:24px;background:#4f9f4a;border-radius:0px;"></div>
<div class="t" style="right:296.0px;top:1054.8px;font-size:12px;line-height:12px;color:#ccccdc;font-weight:700;">0</div>
<div class="b" style="left:1337px;top:1078px;width:300px;height:1px;background:#25282e;border-radius:0px;"></div>
<div class="t" style="left:1342.5px;top:1088.7px;font-size:12px;line-height:12px;color:#ccccdc;font-weight:700;letter-spacing:-0.372px;" id="fit57">marcchipouras</div>
<div class="b" style="left:1493px;top:1083px;width:114px;height:24px;background:#22252b;border-radius:5px;"></div>
<div class="b" style="left:1493px;top:1083px;width:2px;height:24px;background:#4f9f4a;border-radius:0px;"></div>
<div class="t" style="right:296.0px;top:1088.7px;font-size:12px;line-height:12px;color:#ccccdc;font-weight:700;">0</div>
<div class="b" style="left:1337px;top:1112px;width:300px;height:1px;background:#25282e;border-radius:0px;"></div>
<div class="t" style="left:1342.5px;top:1122.7px;font-size:12px;line-height:12px;color:#ccccdc;font-weight:700;letter-spacing:-0.315px;" id="fit58">marisol</div>
<div class="b" style="left:1493px;top:1117px;width:114px;height:24px;background:#22252b;border-radius:5px;"></div>
<div class="b" style="left:1493px;top:1117px;width:2px;height:24px;background:#4f9f4a;border-radius:0px;"></div>
<div class="t" style="right:296.0px;top:1122.7px;font-size:12px;line-height:12px;color:#ccccdc;font-weight:700;">0</div>
<div class="b" style="left:1640px;top:990px;width:7px;height:152px;background:#1e2025;border-radius:3px;"></div>
<div class="b" style="left:1641px;top:991px;width:5px;height:67px;background:#5a5c66;border-radius:3px;"></div>
</body></html>
